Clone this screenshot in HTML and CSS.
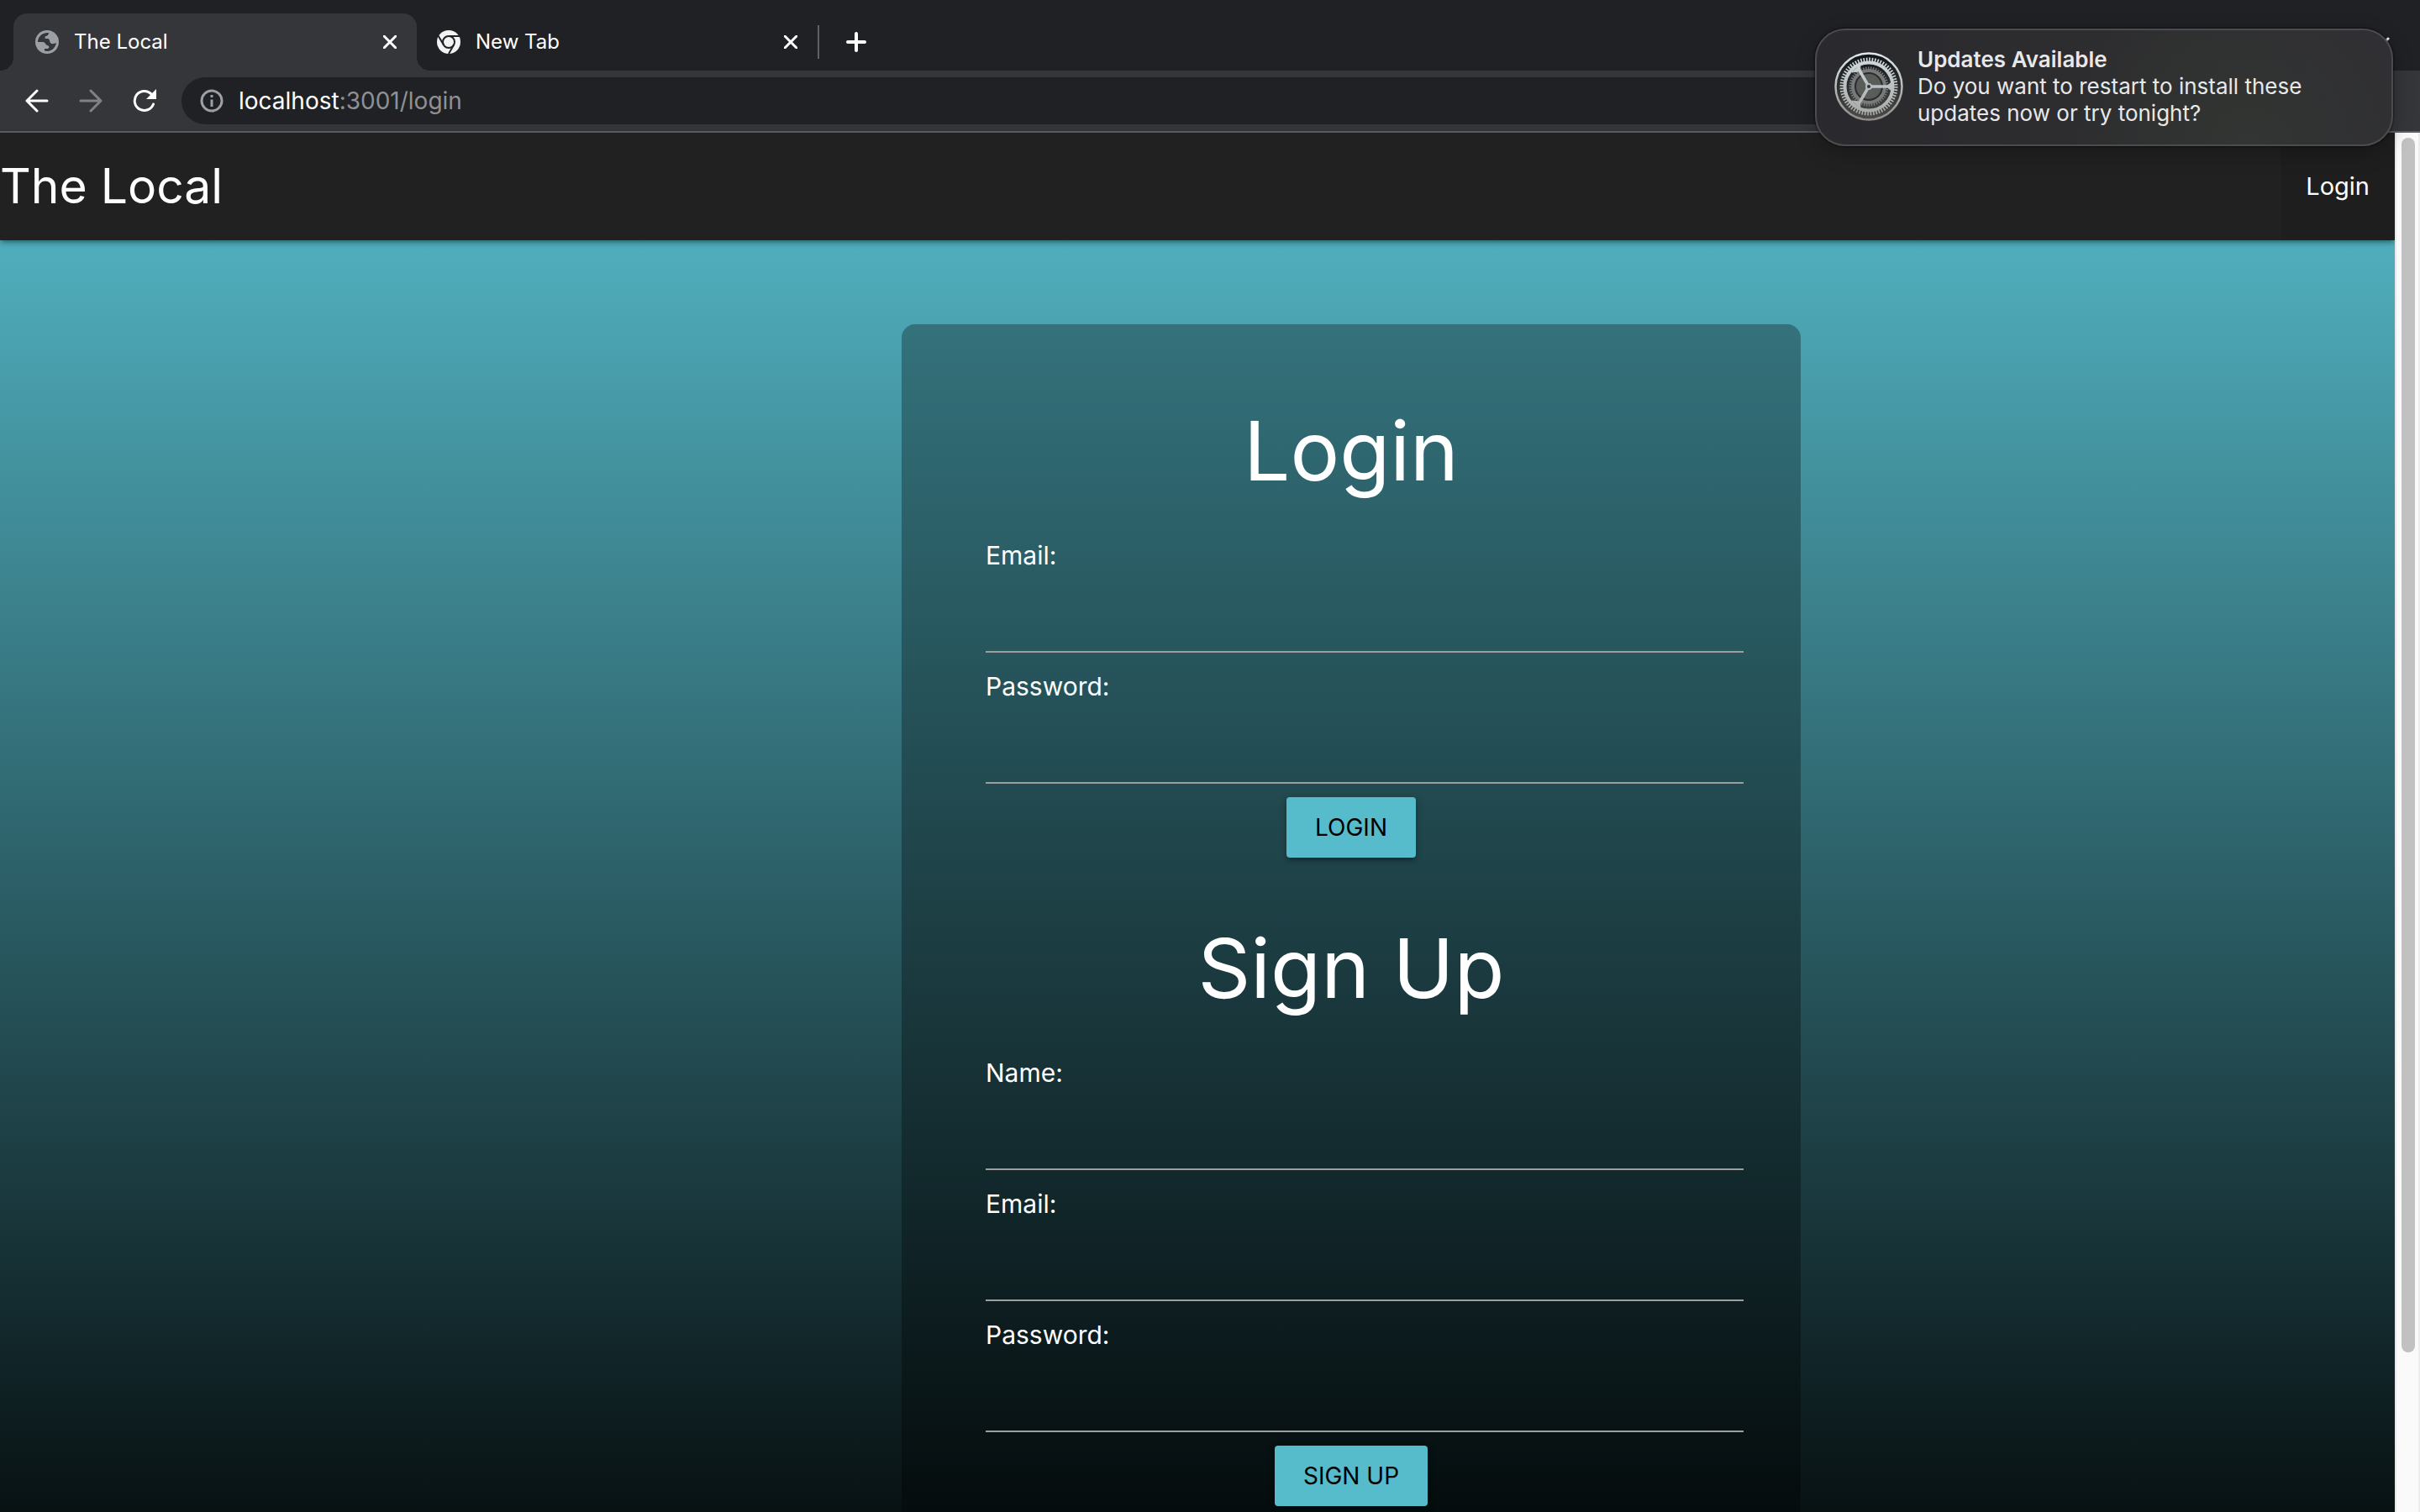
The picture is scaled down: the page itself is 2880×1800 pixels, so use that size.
FILE: index.html
```html
<!DOCTYPE html>
<html lang="en">
<head>
<meta charset="utf-8">
<title>The Local</title>
<link rel="stylesheet" href="styles.css">
</head>
<body>
<div class="window">
  <div class="tabstrip">
    <div class="tab tab-active">
      <svg class="favicon" viewBox="0 0 28 28" aria-hidden="true">
        <circle cx="14" cy="14" r="14" fill="#9aa0a6"/>
        <path d="M14 3 L16 3 C16 5 15 6 13 7 C11 7 11 9 12 10 L15 10 C17 10 17 13 18 15 C20 17 22 16 25 15 C24 20 21 24 15 25 L11 24.500 L11 22 L15 22 C17 21 17 18 14 18 C12 17 12 14 9 14 L3 14 C3 8 7 4 14 3 Z" fill="#35363a"/>
      </svg>
      <span class="tab-title">The Local</span>
      <button class="icon-button" aria-label="Close tab"><svg class="close" viewBox="0 0 16 16"><path d="M1 1 L15 15 M15 1 L1 15"/></svg></button>
    </div>
    <div class="tab">
      <svg class="favicon" viewBox="0 0 28 28" aria-hidden="true">
        <circle cx="14" cy="14" r="14" fill="#f1f3f4"/>
        <g fill="none" stroke="#202124" stroke-width="2">
          <circle cx="14" cy="14" r="7"/>
          <path d="M14 7 H27 M8 17.500 L1.500 6.500 M20 17.500 L14 28"/>
        </g>
      </svg>
      <span class="tab-title">New Tab</span>
      <button class="icon-button" aria-label="Close tab"><svg class="close" viewBox="0 0 16 16"><path d="M1 1 L15 15 M15 1 L1 15"/></svg></button>
    </div>
    <span class="separator"></span>
    <button class="icon-button" aria-label="Open a new tab"><svg class="plus" viewBox="0 0 24 24"><path d="M12 2 V22 M2 12 H22"/></svg></button>
    <button class="icon-button tab-search" aria-label="Search tabs"><svg class="chevron" viewBox="0 0 20 12"><path d="M2 2 L10 10 L18 2"/></svg></button>
  </div>

  <div class="toolbar">
    <button class="icon-button" aria-label="Back"><svg class="nav-icon" viewBox="0 0 28 28"><path d="M26 14 H3 M14 2 L2 14 L14 26"/></svg></button>
    <button class="icon-button" aria-label="Forward" disabled><svg class="nav-icon muted" viewBox="0 0 28 28"><path d="M2 14 H25 M14 2 L26 14 L14 26"/></svg></button>
    <button class="icon-button" aria-label="Reload"><svg class="nav-icon" viewBox="0 0 28 28"><path d="M24.500 18 A11.500 11.500 0 1 1 22.500 6.500"/><path class="solid" d="M28 0 V12 H16 Z"/></svg></button>
    <div class="omnibox">
      <svg class="info" viewBox="0 0 28 28" aria-hidden="true"><circle cx="14" cy="14" r="12"/><path d="M14 12.500 V21 M14 7 V10"/></svg>
      <span class="url"><span class="host">localhost</span>:3001/login</span>
    </div>
  </div>

  <div class="viewport">
    <div class="page">
      <nav class="navbar">
        <a class="brand" href="#">The Local</a>
        <a class="nav-link" href="#login">Login</a>
      </nav>
      <main class="layout">
        <div class="card">
          <form class="form" id="login">
            <h2>Login</h2>
            <div class="field"><label for="login-email">Email:</label><input id="login-email" type="text"></div>
            <div class="field"><label for="login-password">Password:</label><input id="login-password" type="password"></div>
            <button class="submit" type="submit">LOGIN</button>
          </form>
          <form class="form">
            <h2>Sign Up</h2>
            <div class="field"><label for="signup-name">Name:</label><input id="signup-name" type="text"></div>
            <div class="field"><label for="signup-email">Email:</label><input id="signup-email" type="text"></div>
            <div class="field"><label for="signup-password">Password:</label><input id="signup-password" type="password"></div>
            <button class="submit" type="submit">SIGN UP</button>
          </form>
        </div>
      </main>
    </div>
    <div class="scrollbar"><div class="thumb"></div></div>
  </div>
</div>

<aside class="notification">
  <svg class="gear" viewBox="0 0 82 82" aria-hidden="true">
    <defs>
      <linearGradient id="rim" x1="0" y1="0" x2="0" y2="1"><stop offset="0" stop-color="#dbe9ef"/><stop offset="1" stop-color="#8f8d8a"/></linearGradient>
      <linearGradient id="dish" x1="0" y1="0" x2="0" y2="1"><stop offset="0" stop-color="#111315"/><stop offset="1" stop-color="#4c4b49"/></linearGradient>
      <linearGradient id="metal" x1="0" y1="0" x2="0" y2="82" gradientUnits="userSpaceOnUse"><stop offset="0" stop-color="#d3dfe4"/><stop offset="1" stop-color="#a3a3a1"/></linearGradient>
    </defs>
    <circle cx="41" cy="41" r="39.500" fill="url(#dish)" stroke="url(#rim)" stroke-width="2.500"/>
    <circle cx="41" cy="41" r="19" fill="#2c2d2e" stroke="#777a7a" stroke-width="4"/>
    <circle cx="41" cy="41" r="22" fill="none" stroke="#777a7a" stroke-width="3" stroke-dasharray="1.500 1.500"/>
    <circle cx="41" cy="41" r="15" fill="#5a5c5a"/>
    <g fill="none" stroke="url(#metal)">
      <circle cx="41" cy="41" r="28.500" stroke-width="4"/>
      <circle cx="41" cy="41" r="32" stroke-width="5" stroke-dasharray="1.700 1.650"/>
      <path d="M41 41 L67 41.100 M41 41 L28 18.500 M41 41 L28 63.500" stroke-width="3.500"/>
      <path d="M62 41 L69 35 V47 Z M30.500 22.800 L21 24 L31 15 Z M30.500 59.200 L21 58 L31 67 Z" fill="url(#metal)" stroke-width="1"/>
    </g>
    <circle cx="41" cy="41" r="4" fill="#b4babc"/>
    <circle cx="41" cy="41" r="2" fill="#303234"/>
  </svg>
  <div class="notice-text">
    <strong>Updates Available</strong>
    <p>Do you want to restart to install these updates now or try tonight?</p>
  </div>
</aside>
</body>
</html>
```

FILE: styles.css
```css
* { box-sizing: border-box; }

body {
  margin: 0;
  background: #202124;
  color: #fff;
  font-family: Inter, "Liberation Sans", sans-serif;
}

button, input { font: inherit; }
svg { display: block; flex: none; }

.window {
  display: flex;
  flex-direction: column;
  height: 100vh;
  overflow: hidden;
}

.icon-button {
  display: flex;
  align-items: center;
  justify-content: center;
  padding: 0;
  border: 0;
  background: none;
}

.icon-button svg {
  fill: none;
  stroke: #fff;
  stroke-width: 3;
  stroke-linecap: round;
  stroke-linejoin: round;
}

/* Tab strip */
.tabstrip {
  display: flex;
  flex: none;
  align-items: center;
  height: 84px;
  padding: 16px 36px 0 16px;
}

.tab {
  display: flex;
  align-items: center;
  gap: 18px;
  width: 477px;
  height: 68px;
  padding: 0 24px;
  font-size: 24px;
  line-height: 32px;
}

.tab-active {
  position: relative;
  width: 480px;
  padding: 0 24px 0 26px;
  border-radius: 16px 16px 0 0;
  background: #35363a;
}

.tab-active::before,
.tab-active::after {
  content: "";
  position: absolute;
  bottom: 0;
  width: 16px;
  height: 16px;
}

.tab-active::before {
  left: -16px;
  background: radial-gradient(circle at 0 0, #202124 16px, #35363a 16px);
}

.tab-active::after {
  right: -16px;
  background: radial-gradient(circle at 100% 0, #202124 16px, #35363a 16px);
}

.favicon { width: 28px; height: 28px; }
.tab-title { flex: 1; }
.close { width: 16px; height: 16px; }
.plus { width: 24px; height: 24px; }
.icon-button .plus { stroke-width: 4; }
.chevron { width: 20px; height: 12px; }
.separator { width: 2px; height: 40px; margin-right: 32px; background: #5f6063; }
.tab-search { margin-left: auto; }

/* Toolbar */
.toolbar {
  display: flex;
  flex: none;
  align-items: center;
  gap: 36px;
  height: 74px;
  padding: 0 140px 0 30px;
  border-bottom: 2px solid #5f6063;
  background: #35363a;
}

.nav-icon { width: 28px; height: 28px; }
.icon-button .muted { stroke: #818285; }
.icon-button .solid { fill: #fff; stroke: none; }

.omnibox {
  display: flex;
  flex: 1;
  align-items: center;
  gap: 18px;
  height: 56px;
  margin-left: -6px;
  padding: 0 22px;
  border-radius: 28px;
  background: #202124;
}

.info { width: 28px; height: 28px; fill: none; stroke: #9aa0a6; stroke-width: 3; }
.url { color: #8f9093; font-size: 28px; line-height: 36px; }
.host { color: #fff; }

/* Web page */
.viewport {
  display: flex;
  flex: 1;
  align-items: flex-start;
  min-height: 0;
}

.page {
  flex: 1;
  background: linear-gradient(#56bbcb, #000);
}

.navbar {
  display: flex;
  justify-content: space-between;
  background: #212121;
  box-shadow: 0 4px 4px rgba(0, 0, 0, 0.14), 0 6px 2px -4px rgba(0, 0, 0, 0.12), 0 2px 10px rgba(0, 0, 0, 0.2);
  line-height: 128px;
}

.navbar a { color: #fff; text-decoration: none; }
.brand { font-size: 57px; }
.nav-link { padding: 0 30px; background: #1e1e1e; font-size: 29px; }

.layout {
  display: grid;
  grid-template-columns: 1073fr 1070fr 707fr;
  padding: 100px 0 80px;
}

.card {
  display: grid;
  grid-column: 2;
  gap: 81px;
  padding: 100px;
  border-radius: 16px;
  background: rgba(0, 0, 0, 0.3);
}

.form {
  display: flex;
  flex-direction: column;
  gap: 16px;
  min-width: 0;
}

h2 {
  margin: 0 0 33px;
  font-size: 98px;
  font-weight: 400;
  line-height: 102px;
  text-align: center;
}

.field label { display: block; font-size: 30px; line-height: 48px; }

.field input {
  display: block;
  width: calc(100% + 32px);
  height: 92px;
  padding: 0;
  border: 0;
  border-bottom: 2px solid #9e9e9e;
  outline: 0;
  background: transparent;
  color: #fff;
  font-size: 30px;
}

.submit {
  align-self: center;
  height: 72px;
  padding: 0 34px;
  border: 0;
  border-radius: 4px;
  background: #56bbcb;
  box-shadow: 0 4px 4px rgba(0, 0, 0, 0.14), 0 6px 2px -4px rgba(0, 0, 0, 0.12), 0 2px 10px rgba(0, 0, 0, 0.2);
  color: #000;
  font-size: 28px;
  line-height: 72px;
}

.scrollbar {
  flex: none;
  align-self: stretch;
  width: 30px;
  padding: 6px 4px 0 6px;
  border-right: 2px solid #ececec;
  border-left: 2px solid #e8e8e8;
  background: #fafafa;
}

.thumb { width: 16px; height: calc(88% + 6px); border-radius: 8px; background: #c1c1c1; }

/* System notification over the window */
.notification {
  position: absolute;
  top: 34px;
  right: 32px;
  display: flex;
  align-items: center;
  gap: 17px;
  width: 688px;
  height: 140px;
  padding: 0 80px 2px 21px;
  border: 2px solid #4c4c50;
  border-radius: 36px;
  background: radial-gradient(circle at 75% 100%, #323532, rgba(50, 53, 50, 0) 40%), linear-gradient(90deg, #2a292d, #2e2e30 60%, #302f34);
  box-shadow: 0 0 3px #000, 0 8px 24px rgba(0, 0, 0, 0.25);
  color: #e8e8e9;
  font-size: 26px;
  line-height: 32px;
}

.gear { width: 82px; height: 82px; }
.notice-text strong { display: block; font-weight: 600; }
.notice-text p { margin: 0; }
```
